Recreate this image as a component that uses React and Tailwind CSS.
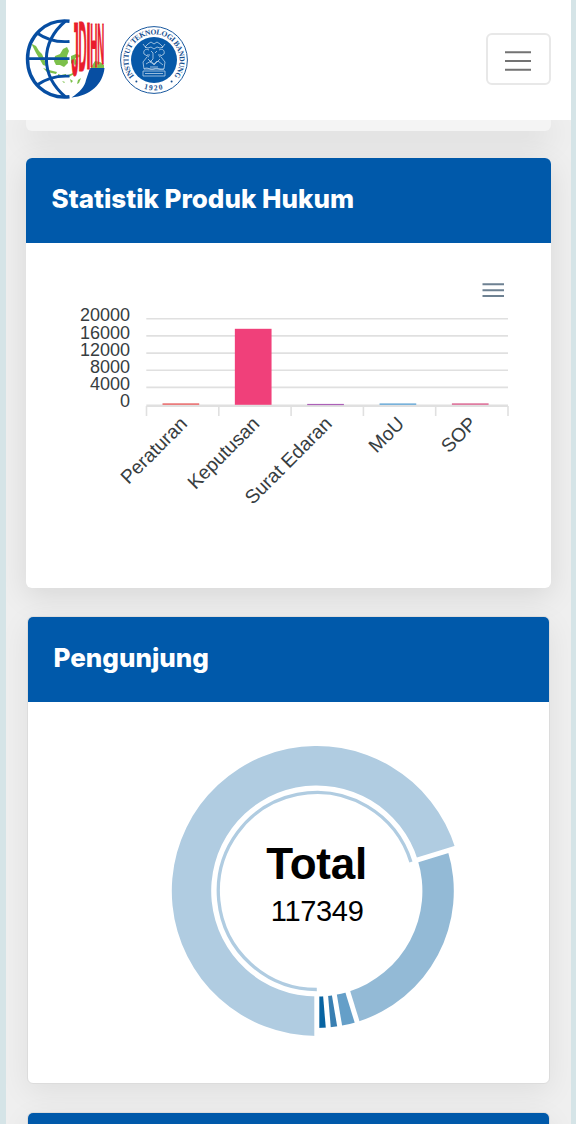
const GRID_LINES = [318.7, 335.9, 353.1, 370.3, 387.4];
const Y_LABELS = ["20000", "16000", "12000", "8000", "4000", "0"];

const PRODUCTS = [
  { label: "Peraturan", top: 403.3, height: 1.6, color: "#e96f70" },
  { label: "Keputusan", top: 328.8, height: 76, color: "#f0407a" },
  { label: "Surat Edaran", top: 403.9, height: 1.2, color: "#ac60b8" },
  { label: "MoU", top: 403.4, height: 1.5, color: "#6cabd8" },
  { label: "SOP", top: 403.3, height: 1.6, color: "#dd7199" },
];

// angles are degrees counter-clockwise from the bottom of the ring
const SLICES = [
  { from: 0, to: 4.8, radius: 137, color: "#0864a2" },
  { from: 4.8, to: 9.6, radius: 137, color: "#397fb2" },
  { from: 9.6, to: 17.1, radius: 137, color: "#659fc8" },
  { from: 17.1, to: 107.1, radius: 137, color: "#93bad6" },
  { from: 107.1, to: 360, radius: 145, color: "#b0cce1" },
];

const LETTERS = [
  { char: "J", x: 51.4, bottom: 60.5, sx: 0.66, sy: 3.8 },
  { char: "D", x: 58.6, bottom: 57, sx: 0.56, sy: 3.55 },
  { char: "I", x: 66.2, bottom: 55, sx: 0.82, sy: 3.38 },
  { char: "H", x: 70.3, bottom: 53, sx: 0.5, sy: 3.18 },
  { char: "N", x: 77.2, bottom: 50, sx: 0.49, sy: 2.83 },
];

function point(deg, r) {
  const a = (deg * Math.PI) / 180;
  return `${Math.sin(a) * r} ${Math.cos(a) * r}`;
}

function slicePath({ from, to, radius }, inner = 105.6) {
  const large = to - from > 180 ? 1 : 0;
  return `M${point(from, inner)} L${point(from, radius)} A${radius} ${radius} 0 ${large} 0 ${point(to, radius)} L${point(to, inner)} A${inner} ${inner} 0 ${large} 1 ${point(from, inner)}Z`;
}

function JdihLogo() {
  return (
    <svg className="overflow-visible" width="90" height="90" viewBox="0 0 90 90">
      <g fill="#7cc04b">
        <path d="M12 30l4 2 3 5 3 3 3 7 1 5-3-1-4-7-3-5-4-8z" />
        <path d="M35 42l5-2 3-5 4-2 2 4-2 5 1 7-4 4-4-2-4 0-2-4z" />
        <path d="M51 42l5-2 4 1v2l-5 1 2 4-2 4-2-4-2 2z" />
        <path d="M71 53l4-6 5 1 4 3v4H71z" />
        <path d="M23 54l6 2 8 2-1 2-9-2zM38 60l3 1 5-1v1l-8 1zM48 61l5-2 1 1-5 3zM42 67l3 1-1 1zM50 65l3 2-2 2zM58 66l3-2-2 5-2 1z" />
      </g>
      <g fill="none" stroke="#074ea2" strokeWidth="3.4">
        <path d="M49.5 7.2C26 4.5 7.5 22 7.5 45s18 40.5 42 37.8" />
        <path d="M45.5 7C20 29 20 61 45.5 83" strokeWidth="3" />
        <path d="M7 44.7H49.5M17 19Q31 29 49.5 27.5M17 71Q31 61 49.5 62.2" strokeWidth="2.8" />
      </g>
      <path d="M70 54H84.5C83 70 70 82 51.5 83.5C60 78 65 72 66 66z" fill="#074ea2" />
      <g fill="#e91d2c" stroke="#e91d2c" strokeWidth="0.3">
        {LETTERS.map(({ char, x, bottom, sx, sy }) => (
          <text
            key={char}
            transform={`translate(${x} ${bottom}) scale(${sx} ${sy})`}
            fontFamily="Liberation Sans, sans-serif"
            fontWeight="700"
            fontSize="20"
          >
            {char}
          </text>
        ))}
      </g>
    </svg>
  );
}

function ItbLogo() {
  return (
    <svg width="70" height="70" viewBox="0 0 70 70">
      <circle cx="35" cy="35" r="33.4" fill="#fff" stroke="#17579e" strokeWidth="1" />
      <circle cx="35" cy="35" r="23" fill="#0759a8" />
      <path id="ring-top" d="M17.2 53.4A25.6 25.6 0 1 1 52.8 53.4" fill="none" />
      <path id="ring-bottom" d="M20 62Q35 68.6 50 62" fill="none" />
      <g fill="#174f8f" fontFamily="Liberation Serif, serif" fontWeight="700" fontSize="7.6">
        <text>
          <textPath href="#ring-top" startOffset="50%" textAnchor="middle" textLength="115" lengthAdjust="spacing">
            INSTITUT TEKNOLOGI BANDUNG
          </textPath>
        </text>
        <text>
          <textPath href="#ring-bottom" startOffset="50%" textAnchor="middle" letterSpacing="1.4">1920</textPath>
        </text>
      </g>
      <circle cx="17.4" cy="56.6" r="1" fill="#174f8f" />
      <circle cx="52.6" cy="56.6" r="1" fill="#174f8f" />
      {/* seated Ganesha with a book */}
      <g fill="none" stroke="#bdd4ea" strokeWidth="0.8">
        <path d="M29 19l3-2 3 2 3-2 3 2 3 3-3 1-3-1-3 2-3-2-3 1-3-1zM24 19l3 4M46 19l-3 4" />
        <path d="M30 25c-4-2-6 1-5 4l5 3M40 25c4-2 6 1 5 4l-5 3M32 26l2 2M38 26l-2 2M34 28v6l-3 3 4 2 3-3" />
        <path d="M28 32l-4 5 1 7h20l1-7-4-5M27 39l5-3 3 4 4-4 5 4M25 44c4-3 6 2 10 0s6 2 10 0M24 46h22v5H24zM26 48.5h18" />
        <path d="M29 34l3 3M41 34l-3 3M31 42h8M28 30h3M39 30h3" />
      </g>
    </svg>
  );
}

function Navbar() {
  return (
    <header className="flex h-[120px] shrink-0 items-center bg-white pr-[20.5px] pb-0.5 pl-3.5">
      <JdihLogo />
      <div className="mt-px ml-[8.7px]">
        <ItbLogo />
      </div>
      <button
        type="button"
        aria-label="Menu"
        className="ml-auto flex h-[52px] w-[65px] items-center justify-center rounded-[6px] border-2 border-[#e8e8e8]"
      >
        <svg className="mt-[3px]" width="26" height="26" viewBox="0 0 26 26" stroke="#737373" strokeWidth="2">
          <path d="M0 4.3H26M0 13H26M0 21.7H26" />
        </svg>
      </button>
    </header>
  );
}

function ProductChart() {
  return (
    <svg
      className="block"
      width="525"
      height="345"
      viewBox="26 243 525 345"
      fontFamily="Liberation Sans, Arial, sans-serif"
      fill="#373d3f"
    >
      <path d="M482.5 284.3H504M482.5 290.2H504M482.5 296H504" stroke="#6e8192" strokeWidth="2.1" />
      {GRID_LINES.map((y) => (
        <path key={y} d={`M146.3 ${y}H508`} stroke="#e0e0e0" strokeWidth="1.6" />
      ))}
      <path d="M146.3 405.8H508" stroke="#e0e0e0" strokeWidth="2.4" />
      {[0, 1, 2, 3, 4, 5].map((i) => (
        <path key={i} d={`M${146.5 + i * 72.3} 406V416`} stroke="#e0e0e0" strokeWidth="1.6" />
      ))}
      {Y_LABELS.map((label, i) => (
        <text key={label} x="130" y={321.4 + i * 17.2} fontSize="18" textAnchor="end">
          {label}
        </text>
      ))}
      {PRODUCTS.map(({ label, top, height, color }, i) => (
        <g key={label}>
          <rect x={162.5 + i * 72.35} y={top} width="36.7" height={height} fill={color} />
          <text
            transform={`translate(${188.3 + i * 72.35} 425) rotate(-45)`}
            fontSize="19.3"
            textAnchor="end"
          >
            {label}
          </text>
        </g>
      ))}
    </svg>
  );
}

function VisitorChart() {
  return (
    <svg
      className="block"
      width="521"
      height="380"
      viewBox="28 702 521 380"
      fontFamily="Liberation Sans, Arial, sans-serif"
      textAnchor="middle"
    >
      <g transform="translate(316.8 891)">
        {SLICES.map((slice) => (
          <path key={slice.from} d={slicePath(slice)} fill={slice.color} />
        ))}
        {SLICES.map((slice) => (
          <path
            key={slice.from}
            d={`M${point(slice.from, 103)} L${point(slice.from, 149)}`}
            stroke="#fff"
            strokeWidth="5"
          />
        ))}
        <path
          d={`M${point(107.1, 98.5)} A98.5 98.5 0 1 0 ${point(360, 98.5)}`}
          fill="none"
          stroke="#b0cce1"
          strokeWidth="3.3"
        />
      </g>
      <text x="316.8" y="879" fontSize="44" fontWeight="700" textLength="101">Total</text>
      <text x="317.3" y="920.5" fontSize="29" textLength="93">117349</text>
    </svg>
  );
}

function CardTitle({ children }) {
  return (
    <h2 className="flex h-[85px] items-center bg-[#0059aa] pb-1 pl-[26px] text-[26px] font-extrabold text-white">
      {children}
    </h2>
  );
}

export default function App() {
  return (
    <div className="flex h-[1124px] w-[576px] overflow-hidden bg-[#d5e4e7] pr-[5px] pl-1.5 font-[Inter,sans-serif]">
      <div className="flex w-[565px] flex-col overflow-hidden bg-[#efefef]">
        <div className="relative z-10">
          <Navbar />
        </div>
        <main className="flex flex-col pr-[20.5px] pl-[19.5px]">
          <div className="h-[11px] shrink-0 rounded-b-[6px] bg-[#f4f4f4] shadow-[0_8px_30px_rgba(0,0,0,0.16)]" />
          <section className="mt-[26.5px] h-[430.5px] overflow-hidden rounded-[6px] bg-white shadow-[0_8px_30px_rgba(0,0,0,0.10)]">
            <CardTitle>Statistik Produk Hukum</CardTitle>
            <ProductChart />
          </section>
          <section className="mx-px mt-7 h-[468px] overflow-hidden rounded-[6px] border border-[#dcdcdc] bg-white shadow-[0_8px_30px_rgba(0,0,0,0.07)]">
            <CardTitle>Pengunjung</CardTitle>
            <VisitorChart />
          </section>
          <section className="mx-px mt-7 h-20 overflow-hidden rounded-[6px] border border-[#dcdcdc] bg-white shadow-[0_8px_30px_rgba(0,0,0,0.07)]">
            <CardTitle />
          </section>
        </main>
      </div>
    </div>
  );
}
